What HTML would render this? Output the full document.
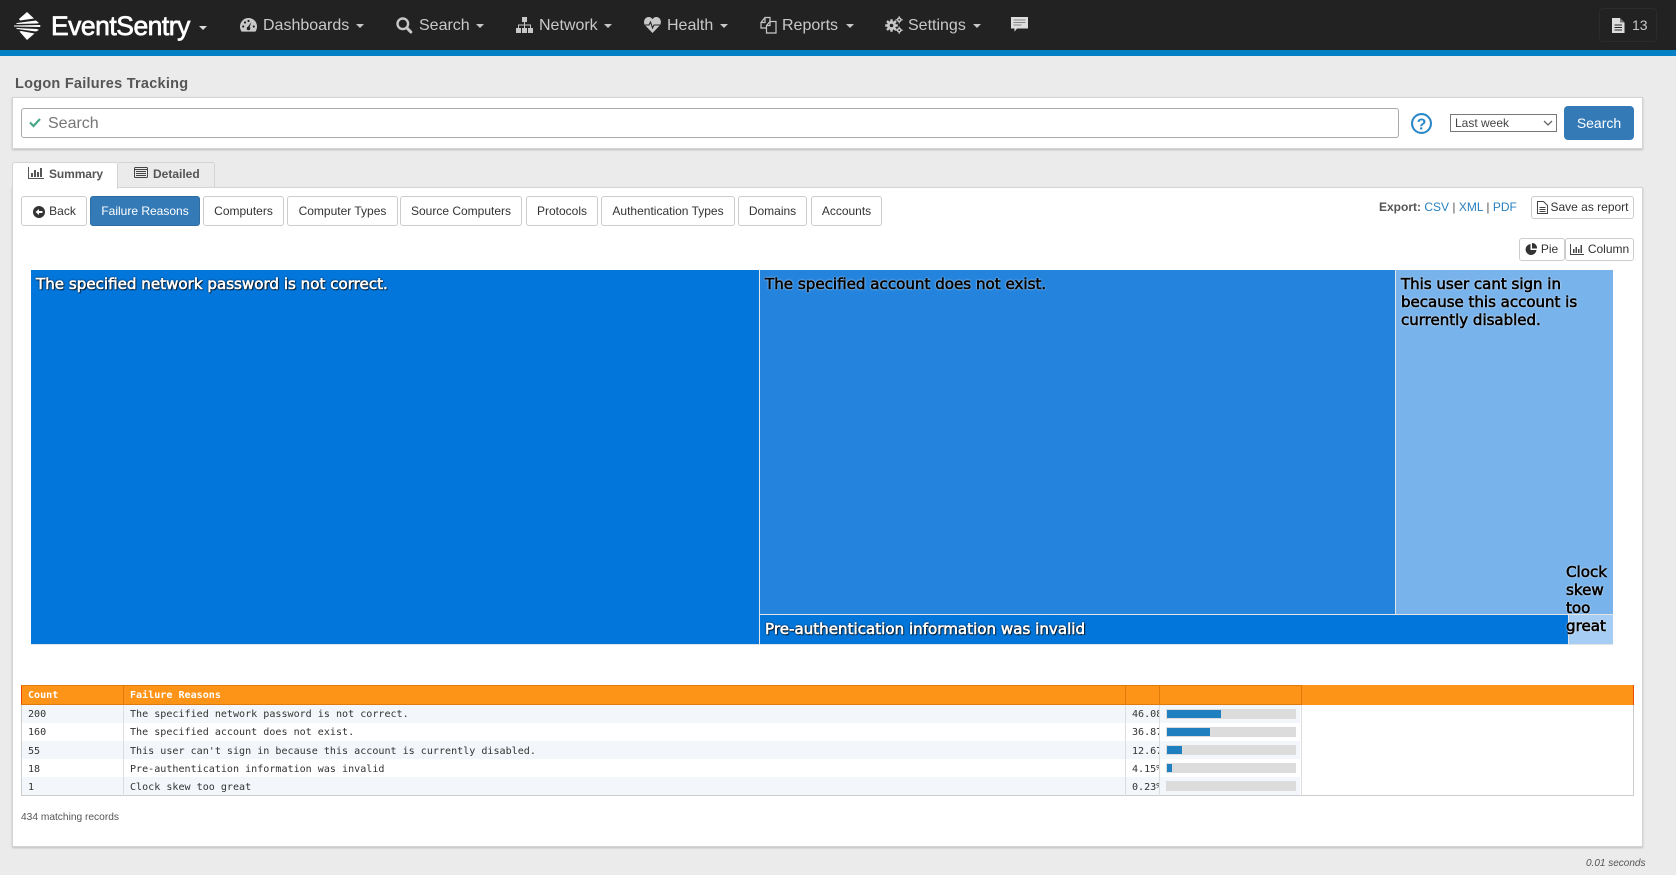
<!DOCTYPE html>
<html><head><meta charset="utf-8"><title>Logon Failures Tracking</title>
<style>
html,body{margin:0;padding:0;background:#ebebeb;width:1676px;height:875px;overflow:hidden;font-family:"Liberation Sans",sans-serif}
.a{position:absolute;white-space:nowrap}
#nav{left:0;top:0;width:1676px;height:50px;background:#222;border-bottom:6px solid #0480c4}
.n{color:#c8c8c8;font-size:16px;top:13.500px;line-height:24px}
.c{position:absolute;width:0;height:0;border-left:4px solid transparent;border-right:4px solid transparent;border-top:4px solid #c8c8c8;top:24px}
.panel{background:#fff;border:1px solid #d4d4d4;box-sizing:border-box;box-shadow:0 1px 2px rgba(0,0,0,.2)}
.b{box-sizing:border-box;background:#fff;border:1px solid #ccc;border-radius:3px;color:#333;font-size:12px;line-height:28px;height:30px;top:196px;text-align:center}
.s{height:22px;line-height:20px;font-size:12px}
.t{box-sizing:border-box;font-family:"DejaVu Sans",sans-serif;font-size:15.1px;line-height:18px;padding:5px 5px;overflow:visible;white-space:normal;-webkit-text-stroke:.6px currentColor}
.w{color:#fff;text-shadow:0 0 2px #000,0 0 1px #000,1px 1px 1px #000}
.k{color:#000;text-shadow:0 0 2px #fff,0 0 1px #fff}
.r{left:22px;width:1278px;height:18px}
.m{font-family:"DejaVu Sans Mono","Liberation Mono",monospace;font-size:10.07px;color:#333;line-height:18px}
.v{position:absolute;top:685px;height:111px;width:1px;background:#ddd}
.h{position:absolute;top:685px;height:20px;width:1px;background:#e07a0a}
.bar{left:1166px;width:130px;height:10px;background:#dcdcdc}
.bar i{position:absolute;left:1px;top:1px;height:8px;background:#2080bf}
svg{position:absolute;overflow:visible}
</style></head><body>
<div class="a" id="nav"></div>

<svg style="left:13px;top:11px" width="28" height="30" viewBox="0 0 28 30"><g fill="#fff">
<path d="M14 1L21 7.500 7 9.500 6 8z"/><path d="M23 9.500L4 12 3 13 24 12.500 26 12z"/><path d="M1 14.500L27 14 27.500 15 27 16 1 15.500z"/><path d="M3 17L24 18 26 19 23 20.500 4 18z"/><path d="M6.500 20.500L8 20 21.500 22.500 14 29z"/></g></svg>
<div class="a" style="left:51px;top:9px;color:#fff;font-size:26.5px;line-height:34px;letter-spacing:-.5px;-webkit-text-stroke:.7px #fff">EventSentry</div>
<div class="c" style="left:199px;border-top-color:#ddd;top:26px"></div>

<svg style="left:240px;top:18px" width="17" height="14" viewBox="0 0 17 14"><path fill="#c8c8c8" d="M8.500 0C3.800 0 0 3.700 0 8.500c0 1.900.6 3.700 1.600 5.100h13.800c1-1.400 1.600-3.200 1.600-5.100C17 3.700 13.200 0 8.500 0z"/><g fill="#222"><circle cx="3.200" cy="8.500" r="1.100"/><circle cx="5" cy="4.500" r="1.100"/><circle cx="8.500" cy="3" r="1.100"/><circle cx="13.800" cy="8.500" r="1.100"/><path d="M11.500 4L9.600 9.200 7.700 9z"/><circle cx="8.500" cy="10.500" r="1.800"/></g></svg>
<div class="a n" style="left:263px">Dashboards</div><div class="c" style="left:356px"></div>

<svg style="left:396px;top:17px" width="16" height="17" viewBox="0 0 16 17"><circle cx="6.800" cy="6.800" r="5.300" fill="none" stroke="#c8c8c8" stroke-width="2.400"/><path d="M10.800 10.800L14.800 15" stroke="#c8c8c8" stroke-width="3" stroke-linecap="round"/></svg>
<div class="a n" style="left:419px">Search</div><div class="c" style="left:476px"></div>

<svg style="left:516px;top:17px" width="17" height="16" viewBox="0 0 17 16"><g fill="#c8c8c8"><rect x="6" y="0" width="5" height="5"/><rect x="0" y="11" width="5" height="5"/><rect x="6" y="11" width="5" height="5"/><rect x="12" y="11" width="5" height="5"/><path d="M8 5h1v2.500h6V11h-1V8.500H9V11H8V8.500H3V11H2V7.500h6z"/></g></svg>
<div class="a n" style="left:539px">Network</div><div class="c" style="left:604px"></div>

<svg style="left:644px;top:17px" width="17" height="16" viewBox="0 0 17 16"><path fill="#c8c8c8" d="M8.500 16L1.500 8.800C-1.500 5.500.5 0 4.700 0c1.800 0 3 1 3.800 2.200C9.300 1 10.500 0 12.300 0c4.200 0 6.200 5.500 3.200 8.800z"/><path d="M1 8h4l1.500-3 2 6 1.500-3h6" fill="none" stroke="#222" stroke-width="1.100"/></svg>
<div class="a n" style="left:667px">Health</div><div class="c" style="left:720px"></div>

<svg style="left:760px;top:16px" width="17" height="18" viewBox="0 0 17 18"><g fill="none" stroke="#c8c8c8" stroke-width="1.200"><path d="M6 12H1V6.500L5 1.500h5v4"/><path d="M1 6.500h4v-5"/><path d="M6.500 9.500l3.500-4h6v11.500H6.500z"/><path d="M6.500 9.500h3.500v-4"/></g></svg>
<div class="a n" style="left:782px">Reports</div><div class="c" style="left:846px"></div>

<svg style="left:885px;top:16px" width="18" height="18" viewBox="0 0 18 18"><g fill="#c8c8c8"><circle cx="6.500" cy="9.500" r="4.500"/><g stroke="#c8c8c8" stroke-width="2.400"><path d="M6.500 3.200v12.600M.2 9.500h12.600M2 5l9 9M11 5l-9 9"/></g><circle cx="14.200" cy="3.800" r="2.400"/><circle cx="14.200" cy="14.200" r="2.400"/><g stroke="#c8c8c8" stroke-width="1.200"><path d="M14.200 .2v7.200M10.600 3.800h7.200M14.200 10.600v7.200M10.600 14.200h7.200"/></g></g><g fill="#222"><circle cx="6.500" cy="9.500" r="1.800"/><circle cx="14.200" cy="3.800" r=".9"/><circle cx="14.200" cy="14.200" r=".9"/></g></svg>
<div class="a n" style="left:908px">Settings</div><div class="c" style="left:973px"></div>

<svg style="left:1011px;top:17px" width="17" height="15" viewBox="0 0 17 15"><path fill="#ddd" d="M0 0h17v11.500H6L3.500 14.800V11.500H0z"/><path stroke="#888" stroke-width="1" d="M2.500 3h12M2.500 5.500h12M2.500 8h8"/></svg>

<div class="a" style="left:1599px;top:8px;width:58px;height:34px;box-sizing:border-box;border:1px solid #2b2b2b;border-radius:4px"></div>
<svg style="left:1612px;top:18px" width="13" height="15" viewBox="0 0 13 15"><path fill="#ddd" d="M0 0h8l4.500 4.500V15H0z"/><path fill="#222" d="M8 0v4.500h4.500L8 0z" opacity=".55"/><path stroke="#222" stroke-width="1" d="M2.500 7h7.500M2.500 9.500h7.500M2.500 12h7.500"/></svg>
<div class="a" style="left:1632px;top:15px;color:#c8c8c8;font-size:14px;line-height:20px">13</div>

<div class="a" style="left:15px;top:75px;font-size:14.5px;font-weight:bold;color:#555;line-height:18px;letter-spacing:.25px">Logon Failures Tracking</div>

<div class="a panel" style="left:12px;top:97px;width:1631px;height:52px"></div>
<div class="a" style="left:21px;top:108px;width:1378px;height:30px;box-sizing:border-box;border:1px solid #aaa;border-radius:3px;background:#fff"></div>
<svg style="left:29px;top:118px" width="12" height="10" viewBox="0 0 12 10"><path d="M1 4.500l3.500 3.500L11 1" fill="none" stroke="#4aa88a" stroke-width="2.200"/></svg>
<div class="a" style="left:48px;top:113.500px;color:#777;font-size:16px;line-height:20px">Search</div>
<svg style="left:1410.500px;top:113px" width="21" height="21" viewBox="0 0 20 20"><circle cx="10" cy="10" r="9" fill="none" stroke="#2a88c8" stroke-width="2"/><text x="10" y="15.500" text-anchor="middle" font-family="Liberation Sans" font-weight="bold" font-size="15" fill="#2a88c8">?</text></svg>
<div class="a" style="left:1450px;top:114px;width:107px;height:18px;box-sizing:border-box;border:1px solid #777;background:#fff;color:#444;font-size:12px;line-height:16px;padding-left:4px">Last week</div>
<svg style="left:1543px;top:120px" width="10" height="6" viewBox="0 0 10 6"><path d="M1 1l4 4 4-4" fill="none" stroke="#666" stroke-width="1.300"/></svg>
<div class="a" style="left:1564px;top:106px;width:70px;height:34px;background:#337ab7;border-radius:4px;color:#fff;font-size:14px;line-height:34px;text-align:center">Search</div>

<div class="a panel" style="left:12px;top:187px;width:1631px;height:660px"></div>
<div class="a" style="left:12px;top:162px;width:106px;height:27px;box-sizing:border-box;background:#fff;border:1px solid #d4d4d4;border-bottom:none;border-radius:3px 3px 0 0"></div>
<div class="a" style="left:118px;top:162px;width:97px;height:25px;box-sizing:border-box;background:#ebebeb;border:1px solid #d4d4d4;border-left:none;border-bottom:none;border-radius:0 3px 0 0"></div>
<svg style="left:28px;top:167px" width="16" height="12" viewBox="0 0 16 12"><path fill="none" stroke="#555" stroke-width="1" d="M.5 0v11.500H16"/><path fill="#555" d="M3 6h2v4H3zM6 3h2v7H6zM9 5h2v5H9zM12 1h2v9h-2z"/></svg>
<div class="a" style="left:49px;top:165px;font-size:12px;font-weight:bold;color:#555;line-height:18px;letter-spacing:-.1px">Summary</div>
<svg style="left:134px;top:167px" width="14" height="11" viewBox="0 0 14 11"><rect x=".5" y=".5" width="13" height="10" rx="1" fill="none" stroke="#444"/><path stroke="#444" d="M0 2.500h14M2 4.500h10M2 6.500h10M2 8.500h10"/></svg>
<div class="a" style="left:153px;top:165px;font-size:12px;font-weight:bold;color:#555;line-height:18px">Detailed</div>

<div class="a b" style="left:21px;width:66px;padding-left:17px">Back</div>
<svg style="left:33px;top:206px" width="12" height="12" viewBox="0 0 12 12"><circle cx="6" cy="6" r="6" fill="#333"/><path d="M2.500 6L6 3v2h3.500v2H6v2z" fill="#fff"/></svg>
<div class="a b" style="left:90px;width:110px;background:#337ab7;border-color:#2e6da4;color:#fff">Failure Reasons</div>
<div class="a b" style="left:203px;width:81px">Computers</div>
<div class="a b" style="left:287px;width:111px">Computer Types</div>
<div class="a b" style="left:400px;width:122px">Source Computers</div>
<div class="a b" style="left:526px;width:72px">Protocols</div>
<div class="a b" style="left:601px;width:134px">Authentication Types</div>
<div class="a b" style="left:738px;width:69px">Domains</div>
<div class="a b" style="left:811px;width:71px">Accounts</div>

<div class="a" style="left:1379px;top:199px;font-size:12px;line-height:16px;color:#555"><b style="font-weight:bold">Export:</b> <span style="color:#2a80c0">CSV</span> | <span style="color:#2a80c0">XML</span> | <span style="color:#2a80c0">PDF</span></div>
<div class="a b s" style="left:1531px;top:196px;width:103px;padding-left:14px;height:23px">Save as report</div>
<svg style="left:1537px;top:201px" width="11" height="13" viewBox="0 0 11 13"><path fill="none" stroke="#444" d="M.5.500h6l4 4v8H.5z"/><path stroke="#444" d="M2.500 6.500h6M2.500 8.500h6M2.500 10.500h6"/></svg>
<div class="a b s" style="left:1519px;top:238px;width:46px;padding-left:15px;height:23px">Pie</div>
<svg style="left:1525px;top:243px" width="12" height="12" viewBox="0 0 12 12"><path fill="#333" d="M5.500 1v6h6A5.500 5.500 0 1 1 5.500 1z"/><path fill="#333" d="M7 0a5 5 0 0 1 5 5.500H7z"/></svg>
<div class="a b s" style="left:1565px;top:238px;width:69px;padding-left:18px;height:23px">Column</div>
<svg style="left:1570px;top:244px" width="14" height="11" viewBox="0 0 14 11"><path fill="none" stroke="#444" d="M.5 0v10.500H14"/><path fill="#444" d="M3 5h1.500v4H3zM5.500 3H7v6H5.500zM8 5h1.500v4H8zM10.500 1H12v8h-1.500z"/></svg>

<div class="a" style="left:31px;top:270px;width:1582px;height:375px;background:#e4e4e4"></div>
<div class="a t w" style="left:31px;top:270px;width:728px;height:374px;background:#0276db">The specified network password is not correct.</div>
<div class="a t k" style="left:760px;top:270px;width:635px;height:344px;background:#2484dd">The specified account does not exist.</div>
<div class="a t k" style="left:1396px;top:270px;width:217px;height:344px;background:#78b3ec;padding-right:4px;font-size:15px">This user cant sign in because this account is currently disabled.</div>
<div class="a t w" style="left:760px;top:615px;width:808px;height:29px;background:#0276db;padding-top:5px">Pre-authentication information was invalid</div>
<div class="a" style="left:1569px;top:615px;width:44px;height:29px;background:#a6cdf4"></div>
<div class="a t k" style="left:1561px;top:562px;width:58px;padding:1px 2px 0 5px">Clock skew too great</div>

<div class="a" style="left:21px;top:685px;width:1613px;height:111px;box-sizing:border-box;border:1px solid #ccc;background:#fff"></div>
<div class="a" style="left:21px;top:685px;width:1613px;height:20px;background:#fd9317;border-left:1px solid #e84a00;border-right:1px solid #e84a00;box-sizing:border-box"></div>
<div class="a" style="left:21px;top:685px;width:1281px;height:1px;background:#e07a0a"></div>
<div class="a" style="left:21px;top:704px;width:1281px;height:1px;background:#e07a0a"></div>
<div class="a r" style="top:705px;background:#f3f6fa"></div>
<div class="a r" style="top:741px;background:#f3f6fa"></div>
<div class="a r" style="top:777px;background:#f3f6fa"></div>
<div class="v" style="left:123px"></div><div class="v" style="left:1125px"></div><div class="v" style="left:1159px"></div><div class="v" style="left:1301px"></div>
<div class="h" style="left:123px"></div><div class="h" style="left:1125px"></div><div class="h" style="left:1159px"></div><div class="h" style="left:1301px"></div>
<div class="a m" style="left:28px;top:686.500px;color:#fff;font-weight:bold">Count</div>
<div class="a m" style="left:130px;top:686.500px;color:#fff;font-weight:bold">Failure Reasons</div>

<div class="a m" style="left:28px;top:706px">200</div><div class="a m" style="left:130px;top:706px">The specified network password is not correct.</div>
<div class="a m" style="left:28px;top:724px">160</div><div class="a m" style="left:130px;top:724px">The specified account does not exist.</div>
<div class="a m" style="left:28px;top:743px">55</div><div class="a m" style="left:130px;top:743px">This user can't sign in because this account is currently disabled.</div>
<div class="a m" style="left:28px;top:761px">18</div><div class="a m" style="left:130px;top:761px">Pre-authentication information was invalid</div>
<div class="a m" style="left:28px;top:779px">1</div><div class="a m" style="left:130px;top:779px">Clock skew too great</div>

<div class="a m" style="left:1132px;top:706px;width:27px;overflow:hidden">46.08%</div>
<div class="a m" style="left:1132px;top:724px;width:27px;overflow:hidden">36.87%</div>
<div class="a m" style="left:1132px;top:743px;width:27px;overflow:hidden">12.67%</div>
<div class="a m" style="left:1132px;top:761px;width:27px;overflow:hidden">4.15%</div>
<div class="a m" style="left:1132px;top:779px;width:27px;overflow:hidden">0.23%</div>

<div class="a bar" style="top:709px"><i style="width:54px"></i></div>
<div class="a bar" style="top:727px"><i style="width:43px"></i></div>
<div class="a bar" style="top:745px"><i style="width:15px"></i></div>
<div class="a bar" style="top:763px"><i style="width:5px"></i></div>
<div class="a bar" style="top:781px"></div>

<div class="a" style="left:21px;top:812px;font-size:10.2px;color:#555;line-height:12px">434 matching records</div>
<div class="a" style="left:1586px;top:858px;font-size:10px;font-style:italic;color:#555;line-height:12px">0.01 seconds</div>
</body></html>
